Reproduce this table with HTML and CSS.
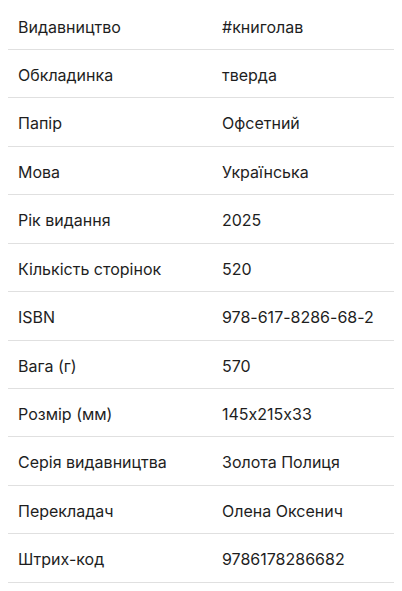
FILE: index.html
```html
<!DOCTYPE html>
<html lang="uk">
<head>
<meta charset="utf-8">
<link rel="stylesheet" href="styles.css">
</head>
<body>
<table class="specs">
<tbody>
<tr><td class="k">Видавництво</td><td class="v">#книголав</td></tr>
<tr><td class="k">Обкладинка</td><td class="v">тверда</td></tr>
<tr><td class="k">Папір</td><td class="v">Офсетний</td></tr>
<tr><td class="k">Мова</td><td class="v">Українська</td></tr>
<tr><td class="k">Рік видання</td><td class="v">2025</td></tr>
<tr><td class="k">Кількість сторінок</td><td class="v">520</td></tr>
<tr><td class="k">ISBN</td><td class="v">978-617-8286-68-2</td></tr>
<tr><td class="k">Вага (г)</td><td class="v">570</td></tr>
<tr><td class="k">Розмір (мм)</td><td class="v">145x215x33</td></tr>
<tr><td class="k">Серія видавництва</td><td class="v">Золота Полиця</td></tr>
<tr><td class="k">Перекладач</td><td class="v">Олена Оксенич</td></tr>
<tr><td class="k">Штрих-код</td><td class="v">9786178286682</td></tr>
</tbody>
</table>
</body>
</html>
```
FILE: styles.css
```css
html, body {
  margin: 0;
  padding: 0;
  background: #fff;
}
body {
  padding: 1.55px 8px 0 8px;
  font-family: Inter, "Noto Sans", sans-serif;
  font-size: 16px;
  font-feature-settings: "calt" 0;
  color: #1e1e1e;
}
.specs {
  width: 386px;
  border-collapse: collapse;
}
.specs td {
  padding: 13px 10px 10.45px 10px;
  line-height: 24px;
  border-bottom: 1px solid #e0e0e0;
  vertical-align: middle;
  white-space: nowrap;
}
.specs .k {
  width: 184px;
}
```
